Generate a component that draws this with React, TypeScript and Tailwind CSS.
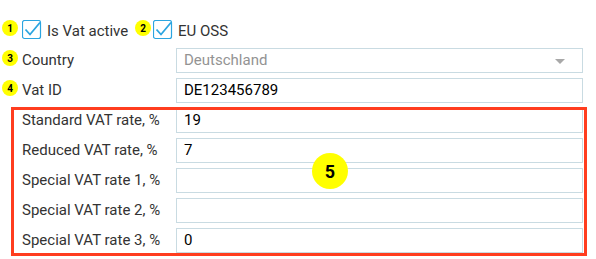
import React from "react";

const Badge = ({ n, className }: { n: string; className: string }) => (
  <span
    className={`absolute flex items-center justify-center rounded-full bg-[#ffff00] text-black font-bold ${className}`}
  >
    {n}
  </span>
);

const Check = () => (
  <svg width="20" height="20" viewBox="0 0 20 20" className="shrink-0">
    <rect x="0.5" y="0.5" width="18" height="18" rx="2" fill="white" stroke="#2ba5e0" strokeWidth="1.2" />
    <path d="M3.5 9.5 L8 14.5 L18 2.5" fill="none" stroke="#2ba5e0" strokeWidth="1.8" />
  </svg>
);

const Field = ({ label, value, muted, select }: { label: string; value: string; muted?: boolean; select?: boolean }) => (
  <div className="flex h-[25px] items-center">
    <div className="w-[154px] shrink-0 text-[15px] text-[#333]">{label}</div>
    <div className="relative flex h-[25px] w-[407px] items-center border border-[#c9dbe2] bg-white px-[7px]">
      <span className={`text-[15px] ${muted ? "text-[#939393]" : "text-black"}`}>{value}</span>
      {select && (
        <svg width="10" height="6" viewBox="0 0 10 6" className="absolute right-[17px] top-[10px]">
          <path d="M0 0 H10 L5 5 Z" fill="#a8a8a8" />
        </svg>
      )}
    </div>
  </div>
);

export default function App() {
  return (
    <div className="relative h-[259px] w-[596px] overflow-hidden bg-white font-['Roboto',sans-serif]">
      <div className="flex flex-col gap-[5px] pl-[22px] pt-[20px]">
        <div className="mb-[3px] flex h-[20px] items-center text-[15px] text-[#333]">
          <Check />
          <span className="ml-[5px] mt-[2px] w-[106px] whitespace-nowrap">Is Vat active</span>
          <Check />
          <span className="ml-[5px] mt-[2px]">EU OSS</span>
        </div>
        <Field label="Country" value="Deutschland" muted select />
        <Field label="Vat ID" value="DE123456789" />
        <Field label="Standard VAT rate, %" value="19" />
        <Field label="Reduced VAT rate, %" value="7" />
        <Field label="Special VAT rate 1, %" value="" />
        <Field label="Special VAT rate 2, %" value="" />
        <Field label="Special VAT rate 3, %" value="0" />
      </div>

      <Badge n="1" className="left-[2px] top-[20px] h-[16px] w-[16px] text-[10px]" />
      <Badge n="2" className="left-[135px] top-[20px] h-[16px] w-[16px] text-[10px]" />
      <Badge n="3" className="left-[2px] top-[50px] h-[16px] w-[16px] text-[10px]" />
      <Badge n="4" className="left-[2px] top-[80px] h-[16px] w-[16px] text-[10px]" />

      <div className="absolute left-[11px] top-[107px] h-[149px] w-[576px] border-[3px] border-[#ff3d1f]" />
      <Badge n="5" className="left-[312px] top-[153px] h-[36px] w-[36px] text-[18px]" />
    </div>
  );
}
